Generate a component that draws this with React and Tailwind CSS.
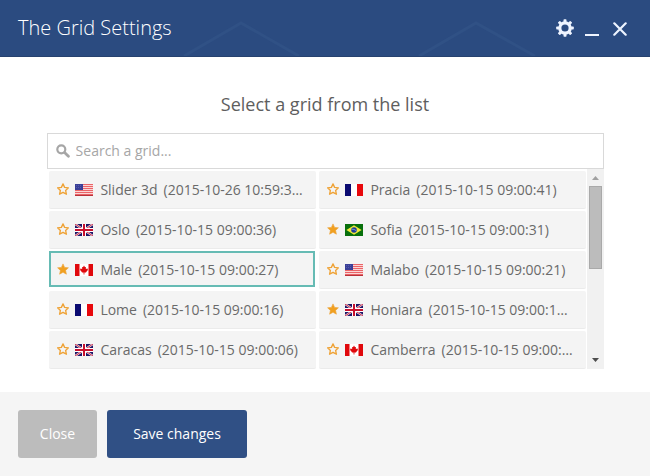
import React from "react";

const STAR =
  "M6 0.9 L7.6 4.4 L11.4 4.8 L8.6 7.4 L9.4 11.2 L6 9.3 L2.6 11.2 L3.4 7.4 L0.6 4.8 L4.4 4.4 Z";

function Star({ filled }) {
  return (
    <svg viewBox="0 0 12 12" className="mb-[1px] ml-[7.5px] h-[12px] w-[12px] shrink-0">
      <path
        d={STAR}
        fill={filled ? "#f0a020" : "none"}
        stroke="#efa337"
        strokeWidth={filled ? 0.6 : 1.35}
        strokeLinejoin="round"
      />
    </svg>
  );
}

function FlagUS() {
  return (
    <>
      <rect width="18" height="12" fill="#fbd5d5" />
      {[0, 2, 4, 6, 8, 10].map((y) => (
        <rect key={y} y={y} width="18" height="1" fill="#ea6468" />
      ))}
      <rect y="11" width="18" height="1" fill="#b8323a" />
      <rect width="8" height="6" fill="#3a3f98" />
      <path d="M1 1.5H7M1 3.5H7" stroke="#6670b8" strokeWidth="0.6" strokeDasharray="1 1" />
    </>
  );
}

function FlagFR() {
  return (
    <>
      <rect width="18" height="12" fill="#fff" />
      <rect width="6" height="12" fill="#0a0a70" />
      <rect x="12" width="6" height="12" fill="#e8080c" />
    </>
  );
}

function FlagGB() {
  return (
    <>
      <rect width="18" height="12" fill="#1c1666" />
      <path d="M0 0L18 12M18 0L0 12" stroke="#f4dfe8" strokeWidth="2.2" />
      <path d="M0 0L18 12M18 0L0 12" stroke="#c41836" strokeWidth="0.9" />
      <path d="M9 0V12M0 6H18" stroke="#fff" strokeWidth="4" />
      <path d="M9 0V12M0 6H18" stroke="#c8102e" strokeWidth="2" />
    </>
  );
}

function FlagBR() {
  return (
    <>
      <rect width="18" height="12" fill="#08700c" />
      <path d="M9 1.2L16.6 6L9 10.8L1.4 6Z" fill="#f2e83a" />
      <circle cx="9" cy="6" r="2.8" fill="#1c3c96" />
      <path d="M6.6 5.2Q9 4.8 11.4 6.8" stroke="#9fc0e0" strokeWidth="0.7" fill="none" />
    </>
  );
}

function FlagCA() {
  return (
    <>
      <rect width="18" height="12" fill="#fff" />
      <rect width="4.5" height="12" fill="#e0080c" />
      <rect x="13.5" width="4.5" height="12" fill="#e0080c" />
      <path
        d="M9 1.6L10 3.2L11 2.9L10.8 5L12.6 4.4L12.9 6L11.2 8L11 8.6H9.4V10.4H8.6V8.6H7L6.8 8L5.1 6L5.4 4.4L7.2 5L7 2.9L8 3.2Z"
        fill="#e0080c"
      />
    </>
  );
}

const FLAGS = { us: FlagUS, fr: FlagFR, gb: FlagGB, br: FlagBR, ca: FlagCA };

const GRIDS = [
  { name: "Slider 3d", date: "(2015-10-26 10:59:3…", flag: "us" },
  { name: "Pracia", date: "(2015-10-15 09:00:41)", flag: "fr" },
  { name: "Oslo", date: "(2015-10-15 09:00:36)", flag: "gb" },
  { name: "Sofia", date: "(2015-10-15 09:00:31)", flag: "br", starred: true },
  { name: "Male", date: "(2015-10-15 09:00:27)", flag: "ca", starred: true, selected: true },
  { name: "Malabo", date: "(2015-10-15 09:00:21)", flag: "us" },
  { name: "Lome", date: "(2015-10-15 09:00:16)", flag: "fr" },
  { name: "Honiara", date: "(2015-10-15 09:00:1…", flag: "gb", starred: true },
  { name: "Caracas", date: "(2015-10-15 09:00:06)", flag: "gb" },
  { name: "Camberra", date: "(2015-10-15 09:00:…", flag: "ca" },
];

function GridItem({ name, date, flag, starred, selected }) {
  const Flag = FLAGS[flag];
  return (
    <li
      className={
        "flex items-center bg-[#f4f4f4] " +
        (selected
          ? "mr-px h-[36px] pt-px outline-2 -outline-offset-2 outline-[#66bbb4]"
          : "h-[38px] rounded-[2px] border-b border-[#ebebeb]")
      }
    >
      <Star filled={starred} />
      <svg viewBox="0 0 18 12" className="ml-[6.5px] h-[12px] w-[18px] shrink-0">
        <Flag />
      </svg>
      <span className="ml-[7.4px] whitespace-nowrap text-[14px] leading-[20px] text-[#6a6a6a]">
        {name}
        <span className="ml-[6px]">{date}</span>
      </span>
    </li>
  );
}

export default function App() {
  return (
    <div className="flex h-[476px] w-[650px] flex-col overflow-hidden bg-white font-['Open_Sans',sans-serif]">
      <header className="relative flex h-[57px] shrink-0 items-center border-b border-[#27426f] bg-[#2b4b80] pl-[18px] pr-[23px]">
        <svg viewBox="0 0 650 56" className="absolute inset-0 h-[56px] w-[650px]" fill="none" stroke="#305185" strokeWidth="3">
          <path d="M184 56L241 23L299 56M419 56L476 23L535 56" />
        </svg>
        <h1 className="relative text-[20px] font-light leading-[28px] text-white">The Grid Settings</h1>
        <div className="relative ml-auto flex items-center text-white">
          <svg viewBox="0 0 18 18" className="mb-[1px] h-[18px] w-[18px]">
            <circle cx="9" cy="9" r="5.2" fill="none" stroke="#eef4ff" strokeWidth="3.2" />
            {[0, 45, 90, 135, 180, 225, 270, 315].map((a) => (
              <rect key={a} x="7.5" y="0.2" width="3" height="3.5" rx="0.7" fill="#eef4ff" transform={`rotate(${a} 9 9)`} />
            ))}
          </svg>
          <span className="ml-[11px] mt-[13px] h-[2px] w-[14px] bg-[#eef4ff]" />
          <svg viewBox="0 0 14 14" className="ml-[14px] mt-[2px] h-[14px] w-[14px]" stroke="#eef4ff" strokeWidth="2.2" strokeLinecap="round">
            <path d="M1.3 1.3L12.7 12.7M12.7 1.3L1.3 12.7" />
          </svg>
        </div>
      </header>

      <main className="flex flex-1 flex-col px-[47px] pt-[35px]">
        <h2 className="text-center text-[18px] leading-[24px] text-[#5e5e5e]">Select a grid from the list</h2>
        <label className="mt-[17px] flex h-[36px] w-[557px] shrink-0 items-center border border-[#d9d9d9] bg-white pl-[8px]">
          <svg viewBox="0 0 14 14" className="h-[14px] w-[14px]" fill="none" stroke="#a6a6a6">
            <circle cx="5.3" cy="5.3" r="4" strokeWidth="2.2" />
            <path d="M8.8 8.8L12.4 12.3" strokeWidth="2.8" strokeLinecap="round" />
          </svg>
          <input
            className="ml-[5.6px] flex-1 text-[14px] leading-[20px] outline-none placeholder:text-[#a6a6a6]"
            placeholder="Search a grid..."
          />
        </label>
        <div className="flex h-[200px] w-[557px]">
          <ul className="grid w-[540px] auto-rows-[38px] grid-cols-[267px_267px] content-start gap-x-[3px] gap-y-[2px] pl-[2px] pt-[2px]">
            {GRIDS.map((g) => (
              <GridItem key={g.name} {...g} />
            ))}
          </ul>
          <div className="flex w-[17px] flex-col items-center bg-[#f1f1f1]">
            <svg viewBox="0 0 17 17" className="h-[17px] w-[17px] shrink-0">
              <path d="M5 11L8.5 7L12 11Z" fill="#a0a0a0" />
            </svg>
            <div className="h-[83px] w-[13px] border border-[#a9a9a9] bg-[#bcbcbc]" />
            <svg viewBox="0 0 17 17" className="mt-auto h-[17px] w-[17px] shrink-0">
              <path d="M5 6L8.5 10L12 6Z" fill="#4d4d4d" />
            </svg>
          </div>
        </div>
      </main>

      <footer className="flex h-[84px] shrink-0 items-center gap-[10px] bg-[#f5f5f5] pl-[18px]">
        <button className="h-[48px] w-[79px] rounded-[3px] bg-[#bcbcbc] pb-[2px] text-[14px] text-white">Close</button>
        <button className="h-[48px] w-[140px] rounded-[3px] bg-[#305085] pb-[2px] text-[14px] text-white">Save changes</button>
      </footer>
    </div>
  );
}
